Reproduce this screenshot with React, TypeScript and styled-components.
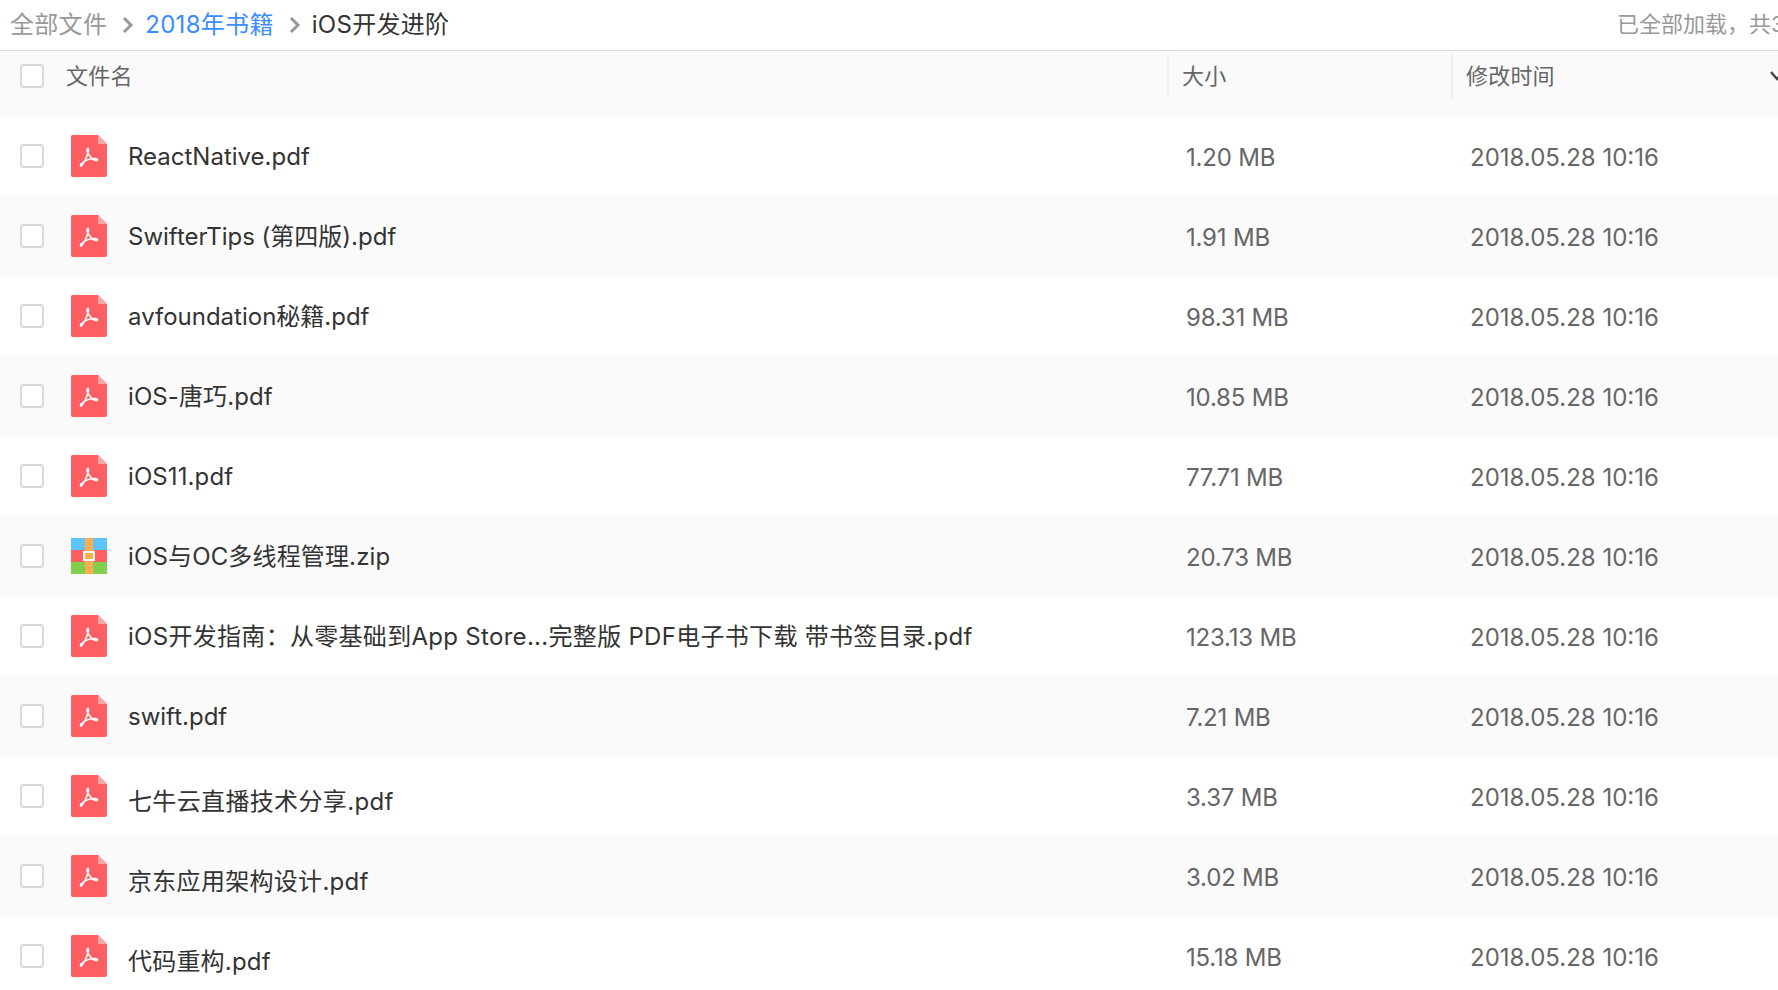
import React from 'react';
import styled, { createGlobalStyle } from 'styled-components';

const GlobalStyle = createGlobalStyle`
  html, body {
    margin: 0;
    padding: 0;
    background: #fff;
    overflow: hidden;
  }
  * { box-sizing: border-box; }
`;

const Page = styled.div`
  width: 1778px;
  height: 990px;
  overflow: hidden;
  font-family: Inter, "Noto Sans CJK SC", sans-serif;
  color: #333;
`;

const TopBar = styled.div`
  height: 51px;
  display: flex;
  align-items: center;
  justify-content: space-between;
  padding: 0 0 1px 10px;
  border-bottom: 1px solid #dcdcdc;
  font-size: 24px;
  line-height: 32px;
  white-space: nowrap;
  overflow: hidden;
`;

const Crumbs = styled.div`
  display: flex;
  align-items: center;
  letter-spacing: 0.3px;
`;

const Crumb = styled.span<{ $tone: 'muted' | 'link' | 'current' }>`
  color: ${({ $tone }) => ($tone === 'muted' ? '#999' : $tone === 'link' ? '#3b8cff' : '#333')};
`;

const Chevron = styled.svg`
  width: 12px;
  height: 18px;
  margin: 0 11px 0 15px;
  fill: none;
  stroke: #999;
  stroke-width: 3;
`;

const LoadedNote = styled.span`
  font-size: 22px;
  color: #999;
  width: 161px;
  margin-bottom: 2px;
  overflow: hidden;
`;

const HeaderRow = styled.div`
  height: 65px;
  display: grid;
  grid-template-columns: 1167px 284px 1fr;
  background: #fafafa;
  font-size: 22px;
  line-height: 30px;
  color: #666;
  letter-spacing: 0.2px;
`;

const HeaderCell = styled.div<{ $pad: number; $divided?: boolean }>`
  height: 44px;
  margin-top: 3px;
  display: flex;
  align-items: center;
  position: relative;
  padding-left: ${({ $pad }) => $pad}px;
  border-left: ${({ $divided }) => ($divided ? '2px solid #efefef' : '0')};
`;

const Check = styled.span`
  flex: none;
  width: 24px;
  height: 24px;
  background: #fff;
  border: 2px solid #d8d8d8;
  border-radius: 4px;
`;

const HeaderLabel = styled.span`
  margin-left: 22px;
`;

const SortArrow = styled.svg`
  position: absolute;
  right: -6px;
  top: 17px;
  width: 14px;
  height: 10px;
  fill: none;
  stroke: #444;
  stroke-width: 2.4;
`;

const Row = styled.div<{ $striped: boolean }>`
  height: 80px;
  display: grid;
  grid-template-columns: 1167px 284px 1fr;
  align-items: center;
  background: ${({ $striped }) => ($striped ? '#fafafa' : '#fff')};
  font-size: 24px;
  line-height: 32px;
`;

const NameCell = styled.div`
  display: flex;
  align-items: center;
  padding-left: 20px;
`;

const IconSlot = styled.svg`
  flex: none;
  width: 36px;
  height: 42px;
  margin-left: 27px;
`;

const FileName = styled.span<{ $low: boolean; $tracking: number }>`
  margin-left: 21px;
  color: #333;
  white-space: nowrap;
  letter-spacing: ${({ $tracking }) => $tracking}px;
  padding-top: ${({ $low }) => ($low ? '12px' : '2px')};
`;

const Meta = styled.div<{ $inset: number; $tracking: number }>`
  padding: 4px 0 0 ${({ $inset }) => $inset}px;
  color: #666;
  letter-spacing: ${({ $tracking }) => $tracking}px;
  white-space: nowrap;
`;

const PdfIcon = () => (
  <IconSlot viewBox="0 0 36 42">
    <path d="M2 0H27L36 9V40a2 2 0 0 1-2 2H2a2 2 0 0 1-2-2V2a2 2 0 0 1 2-2Z" fill="#ff5f63" />
    <path d="M27 0L36 9H27Z" fill="#ffa6a8" />
    <path
      d="M9.5 31C12 30 15 24 17 18C18 14 17.5 13 16.5 13.5C15.5 14.5 16 17 18 20C20 23 23 25.5 26 25.5C27.5 25 26.5 23.5 24 23.5C19 23.5 13 26 10 29C9 30.5 9.5 31.5 10.5 31Z"
      fill="none"
      stroke="#fff"
      strokeWidth="1.5"
      strokeLinejoin="round"
    />
  </IconSlot>
);

const ZipIcon = () => (
  <IconSlot viewBox="0 0 36 42">
    <rect x="0" y="3" width="36" height="12" fill="#5bc4f9" />
    <rect x="0" y="15" width="36" height="12" fill="#ff5f63" />
    <rect x="0" y="27" width="36" height="12" fill="#80cf4d" />
    <rect x="14" y="3" width="8" height="36" fill="#ffad4d" />
    <rect x="13" y="17" width="10" height="8" fill="#ffad4d" stroke="#fff" strokeWidth="2" />
  </IconSlot>
);

const files = [
  { name: 'ReactNative.pdf', size: '1.20 MB', tracking: 0 },
  { name: 'SwifterTips (第四版).pdf', size: '1.91 MB', tracking: 0 },
  { name: 'avfoundation秘籍.pdf', size: '98.31 MB', tracking: 0 },
  { name: 'iOS-唐巧.pdf', size: '10.85 MB', tracking: 0.1 },
  { name: 'iOS11.pdf', size: '77.71 MB', tracking: 0.1 },
  { name: 'iOS与OC多线程管理.zip', size: '20.73 MB', tracking: 0.15, zip: true },
  { name: 'iOS开发指南：从零基础到App Store...完整版 PDF电子书下载 带书签目录.pdf', size: '123.13 MB', tracking: 0.3 },
  { name: 'swift.pdf', size: '7.21 MB', tracking: 0 },
  { name: '七牛云直播技术分享.pdf', size: '3.37 MB', tracking: 0.35, low: true },
  { name: '京东应用架构设计.pdf', size: '3.02 MB', tracking: 0.3, low: true },
  { name: '代码重构.pdf', size: '15.18 MB', tracking: 0.2, low: true },
];

export default function App() {
  return (
    <Page>
      <GlobalStyle />
      <TopBar>
        <Crumbs>
          <Crumb $tone="muted">全部文件</Crumb>
          <Chevron viewBox="0 0 12 18">
            <path d="M2 2l7 7-7 7" />
          </Chevron>
          <Crumb $tone="link">2018年书籍</Crumb>
          <Chevron viewBox="0 0 12 18">
            <path d="M2 2l7 7-7 7" />
          </Chevron>
          <Crumb $tone="current">iOS开发进阶</Crumb>
        </Crumbs>
        <LoadedNote>已全部加载，共30个</LoadedNote>
      </TopBar>
      <HeaderRow>
        <HeaderCell $pad={20}>
          <Check />
          <HeaderLabel>文件名</HeaderLabel>
        </HeaderCell>
        <HeaderCell $pad={13} $divided>大小</HeaderCell>
        <HeaderCell $pad={13} $divided>
          修改时间
          <SortArrow viewBox="0 0 14 10">
            <path d="M1 1l6 7 6-7" />
          </SortArrow>
        </HeaderCell>
      </HeaderRow>
      {files.map((file, index) => (
        <Row key={file.name} $striped={index % 2 === 1}>
          <NameCell>
            <Check />
            {file.zip ? <ZipIcon /> : <PdfIcon />}
            <FileName $low={!!file.low} $tracking={file.tracking}>{file.name}</FileName>
          </NameCell>
          <Meta $inset={19} $tracking={-0.2}>{file.size}</Meta>
          <Meta $inset={19} $tracking={0}>2018.05.28 10:16</Meta>
        </Row>
      ))}
    </Page>
  );
}
